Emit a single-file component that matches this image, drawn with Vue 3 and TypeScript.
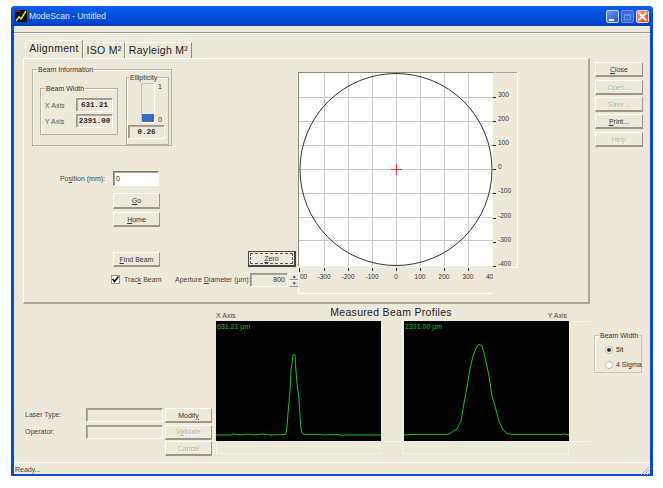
<script setup lang="ts">
const gridX = [324, 348, 372, 396, 420, 444, 468].map((v) => v - 299)
const gridY = [97, 121, 145, 169, 193, 217, 240].map((v) => v - 73)
const yLabels = [
  { t: '300', y: 20 }, { t: '200', y: 44 }, { t: '100', y: 68 }, { t: '0', y: 92 },
  { t: '-100', y: 116 }, { t: '-200', y: 141 }, { t: '-300', y: 165 }, { t: '-400', y: 189 },
]
const xLabels = [
  { t: '-300', x: 25 }, { t: '-200', x: 49 }, { t: '-100', x: 73 }, { t: '0', x: 97 },
  { t: '100', x: 121 }, { t: '200', x: 145 }, { t: '300', x: 169 },
]
const xPts = '0,114 15,114 17,113 26,114 30,113 38,114 46,113 55,114 69,113.5 70,113 71,105 72,92 74,70 75,50 77,34 78,33.5 79,34 80,50 81,62 83,78 84,95 85,108 86,112 88,113.5 105,113.5 107,114 120,113.5 124,114 165,114'
const yPts = '0,114 8,113.5 44,113.5 48,111 53,108 57,100 60,82 63,66 66,48 69,35 72,27 75,23 78,25 81,36 85,55 88,75 91,85 95,100 99,109 104,113 110,113.5 157,113.5 161,113 165,114'
</script>

<template>
  <div class="window">
    <div class="titlebar">
      <svg class="appicon" width="12" height="12" viewBox="0 0 12 12">
        <rect width="12" height="12" fill="#1a1010" />
        <path d="M0 1h5" stroke="#c02020" stroke-width="1.5" />
        <path d="M1 11 L4 7 L6 9 L11 1" stroke="#d8e020" stroke-width="1.5" fill="none" />
      </svg>
      <span class="title">ModeScan - Untitled</span>
      <div class="capbtns">
        <span class="cap min"><i class="minbar"></i></span>
        <span class="cap max"><i class="maxbox"></i></span>
        <span class="cap close">
          <svg width="11" height="11" viewBox="0 0 11 11">
            <path d="M1.5 1.5L9.5 9.5M9.5 1.5L1.5 9.5" stroke="#fff" stroke-width="2" />
          </svg>
        </span>
      </div>
    </div>
    <div class="client">
      <div class="menustrip"></div>

      <div class="tabs">
        <span class="tab active">Alignment</span>
        <span class="tab iso">ISO M²</span>
        <span class="tab ray">Rayleigh M²</span>
      </div>

      <div class="upper">
        <div class="panel">
          <div class="leftcol">
            <div class="group beam">
              <span class="legend lg-beam">Beam Information</span>
              <div class="group width">
                <span class="legend lg-width">Beam Width</span>
                <div class="axisrow"><label>X Axis</label><span class="sunken val">631.21</span></div>
                <div class="axisrow"><label>Y Axis</label><span class="sunken val">2391.00</span></div>
              </div>
              <div class="group ellip">
                <span class="legend lg-ellip">Ellipticity</span>
                <div class="barrow">
                  <div class="bar"><div class="fill"></div></div>
                  <div class="barscale"><span>1</span><span>0</span></div>
                </div>
                <span class="sunken val evalue">0.26</span>
              </div>
            </div>

            <div class="posrow">
              <label>Po<u>s</u>ition (mm):</label>
              <span class="input">0</span>
            </div>
            <button class="btn go"><u>G</u>o</button>
            <button class="btn home"><u>H</u>ome</button>

            <div class="findrow">
              <button class="btn find"><u>F</u>ind Beam</button>
              <button class="btn zero"><span class="focus"><u>Z</u>ero</span></button>
            </div>
            <div class="trackrow">
              <span class="check">
                <svg width="9" height="9" viewBox="0 0 9 9">
                  <path d="M1.5 4L3.5 6.5L7.5 1.5" stroke="#111" stroke-width="1.6" fill="none" />
                </svg>
              </span>
              <span class="tracklabel">Trac<u>k</u> Beam</span>
              <span class="aplabel">Aperture <u>D</u>iameter (µm):</span>
              <span class="sunken apval">800</span>
              <span class="spin"><i>▴</i><i>▾</i></span>
            </div>
          </div>

          <div class="plotarea">
            <div class="plotrow">
              <svg class="plot" width="194" height="193" viewBox="0 0 194 193">
                <rect width="194" height="193" fill="#fff" />
                <line v-for="x in gridX" :key="'gx' + x" :x1="x + 0.5" :x2="x + 0.5" y1="0" y2="193" stroke="#c8c8c8" />
                <line v-for="y in gridY" :key="'gy' + y" x1="0" x2="194" :y1="y + 0.5" :y2="y + 0.5" stroke="#c8c8c8" />
                <circle cx="97" cy="96.5" r="96" fill="none" stroke="#333" stroke-width="1" />
                <path d="M97.5 91V102M92 96.5H103" stroke="#f0303c" stroke-width="1.2" />
              </svg>
              <svg class="axisr" width="24" height="194" viewBox="0 0 24 194">
                <g v-for="l in yLabels" :key="l.t">
                  <line x1="0" x2="3" :y1="l.y + 4.5" :y2="l.y + 4.5" stroke="#222" />
                  <text x="5" :y="l.y + 4" class="tick">{{ l.t }}</text>
                </g>
              </svg>
            </div>
            <svg class="axisb" width="194" height="25" viewBox="0 0 194 25">
              <text x="1" y="11" class="tick">00</text>
              <text x="187" y="11" class="tick">40</text>
              <line x1="0.5" x2="0.5" y1="0" y2="4" stroke="#222" />
              <g v-for="l in xLabels" :key="l.t">
                <line :x1="l.x + 0.5" :x2="l.x + 0.5" y1="0" y2="3" stroke="#222" />
                <text :x="l.x" y="11" text-anchor="middle" class="tick">{{ l.t }}</text>
              </g>
            </svg>
          </div>
        </div>

        <div class="sidebtns">
          <button class="btn"><u>C</u>lose</button>
          <button class="btn off open">Open...</button>
          <button class="btn off save">Save...</button>
          <button class="btn print"><u>P</u>rint...</button>
          <button class="btn off help">Help</button>
        </div>
      </div>

      <div class="lower">
        <div class="operator">
          <div class="oprow">
            <label>Laser Type:</label>
            <span class="sunken opfield"></span>
            <button class="btn opbtn">Modif<u>y</u></button>
          </div>
          <div class="oprow">
            <label>Operator:</label>
            <span class="sunken opfield"></span>
            <button class="btn opbtn off">V<u>a</u>lidate</button>
          </div>
          <div class="oprow">
            <button class="btn opbtn off cancel">Cancel</button>
          </div>
        </div>

        <div class="profiles">
          <div class="profhead">
            <span class="axisname">X Axis</span>
            <span class="proftitle">Measured Beam Profiles</span>
            <span class="axisname">Y Axis</span>
          </div>
          <div class="profplots">
            <div class="profile">
              <div class="scope first">
                <span class="scopeval">631.21 µm</span>
                <svg width="165" height="120" viewBox="0 0 165 120">
                  <polyline :points="xPts" fill="none" stroke="#18c418" stroke-width="1" />
                </svg>
              </div>
              <div class="under"></div>
            </div>
            <div class="profile second">
              <div class="scope">
                <span class="scopeval">2391.00 µm</span>
                <svg width="165" height="120" viewBox="0 0 165 120">
                  <polyline :points="yPts" fill="none" stroke="#18c418" stroke-width="1" />
                </svg>
              </div>
              <div class="under"></div>
            </div>
          </div>
        </div>

        <div class="group bwgroup">
          <span class="legend lg-bw">Beam Width</span>
          <div class="radio"><i class="dot on"></i><span>5lt</span></div>
          <div class="radio"><i class="dot"></i><span>4 Sigma</span></div>
        </div>
      </div>

      <div class="status">
        <span>Ready...</span>
        <svg class="grip" width="10" height="10" viewBox="0 0 10 10">
          <path d="M9 1L1 9M9 4L4 9M9 7L7 9" stroke="#b0ac98" stroke-width="1" />
        </svg>
      </div>
    </div>
  </div>
</template>

<style scoped>
.window {
  box-sizing: border-box;
  width: 642px;
  height: 470px;
  margin: 6px 0 0 11px;
  background: #0a48dc;
  border-radius: 4px 4px 0 0;
  padding: 0 3px 2px 3px;
  display: flex;
  flex-direction: column;
  font-family: "Liberation Sans", Arial, sans-serif;
  font-size: 7px;
  color: #333;
  overflow: hidden;
}
.titlebar {
  height: 20px;
  margin: 0 -3px;
  padding: 0 3px 0 5px;
  flex: none;
  display: flex;
  align-items: center;
  background: linear-gradient(#1668ee 0, #0a5ae8 2px, #0050dc 10px, #0048d4 16px, #0040b8 20px);
}
.appicon { margin-right: 1px; margin-left: -1px; }
.title {
  color: #dfe8fa;
  font-size: 8.5px;
  margin-left: 1px;
}
.capbtns { margin-left: auto; display: flex; gap: 2px; margin-right: 1px; margin-top: 1px; }
.cap {
  box-sizing: border-box;
  width: 13px;
  height: 13px;
  border-radius: 2px;
  border: 1px solid #c8d6f8;
  display: flex;
  align-items: center;
  justify-content: center;
  position: relative;
}
.cap.min { background: linear-gradient(135deg, #6c94f0, #2a58d8); }
.cap.max { background: #3a68e0; border-color: #6c90ec; }
.cap.close { background: linear-gradient(135deg, #f09878, #d84818); border-color: #f0d8d0; }
.minbar { width: 5px; height: 2px; background: #fff; margin: 6px 3px 0 0; }
.maxbox { width: 7px; height: 6px; border: 1px solid #6a8ee8; border-top-width: 2px; box-sizing: border-box; }

.client {
  flex: 1;
  min-height: 0;
  background: #ece9d8;
  display: flex;
  flex-direction: column;
}
.menustrip {
  height: 6px;
  flex: none;
  border-bottom: 1px solid #9d9a88;
  box-shadow: 0 1px 0 #fff;
}
.tabs {
  height: 25px;
  flex: none;
  display: flex;
  align-items: flex-end;
  padding-left: 11px;
  font-size: 10.5px;
  color: #222;
}
.tab {
  box-sizing: border-box;
  height: 16px;
  line-height: 15px;
  border-top: 1px solid #fff;
  border-left: 1px solid #fff;
  border-right: 1px solid #8e8b7a;
  text-align: center;
  letter-spacing: 0.3px;
}
.tab.active { width: 58px; height: 18px; line-height: 15px; }
.tab.iso { width: 42px; }
.tab.ray { width: 67px; }

.upper { display: flex; flex: none; height: 246px; padding-left: 9px; }
.panel {
  box-sizing: border-box;
  width: 567px;
  height: 246px;
  border-top: 1px solid #fff;
  border-left: 1px solid #fff;
  border-right: 2px solid #aca899;
  border-bottom: 2px solid #aca899;
  display: flex;
}
.leftcol { width: 275px; padding: 10px 0 0 8px; box-sizing: border-box; flex: none; }
.group {
  box-sizing: border-box;
  position: relative;
  border: 1px solid #b4b1a0;
  box-shadow: inset 1px 1px 0 #fff;
}
.legend {
  position: absolute;
  top: -4px;
  background: #ece9d8;
  padding: 0 1px;
  line-height: 8px;
  white-space: nowrap;
}
.beam { width: 140px; height: 77px; }
.lg-beam { left: 4px; }
.width { position: absolute; left: 7px; top: 18px; width: 78px; height: 47px; padding-top: 8px; }
.lg-width { left: 4px; }
.axisrow { display: flex; align-items: center; height: 16px; padding-left: 4px; }
.axisrow label { width: 31px; color: #555; }
.sunken {
  box-sizing: border-box;
  display: block;
  border: 1px solid #fff;
  border-top-color: #9a9786;
  border-left-color: #9a9786;
  box-shadow: inset 1px 1px 0 #aca899;
  background: #ece9d8;
}
.val {
  width: 37px;
  height: 14px;
  line-height: 12px;
  text-align: center;
  font-family: "Liberation Mono", monospace;
  font-size: 7.5px;
  font-weight: 700;
  color: #222;
}
.ellip { position: absolute; left: 93px; top: 7px; width: 43px; height: 68px; padding: 5px 2px 0 1px; }
.lg-ellip { left: 2px; }
.barrow { display: flex; height: 42px; }
.bar {
  box-sizing: border-box;
  width: 14px;
  height: 40px;
  margin-left: 13px;
  border: 1px solid #c8c5b4;
  border-right-color: #fff;
  border-bottom-color: #fff;
  display: flex;
  align-items: flex-end;
}
.fill { width: 100%; height: 8px; background: #3a6cc4; }
.barscale {
  margin-left: 3px;
  display: flex;
  flex-direction: column;
  justify-content: space-between;
  height: 40px;
  box-sizing: border-box;
}
.evalue { width: 37px; }

.posrow { display: flex; align-items: center; margin-top: 25px; height: 14px; }
.posrow label { width: 73px; text-align: right; color: #444; margin-right: 8px; }
.input {
  box-sizing: border-box;
  width: 46px;
  height: 15px;
  background: #fff;
  border: 1px solid #fff;
  border-top-color: #7a7868;
  border-left-color: #7a7868;
  box-shadow: inset 1px 1px 0 #aca899;
  color: #222;
  padding-left: 2px;
  line-height: 13px;
}
.btn {
  box-sizing: border-box;
  display: block;
  width: 48px;
  height: 15px;
  padding: 0;
  background: #ece9d8;
  border: 1px solid #fff;
  border-right: 1px solid #9a9786;
  border-bottom: 2px solid #9a9786;
  font-family: "Liberation Sans", Arial, sans-serif;
  font-size: 7px;
  color: #333;
  line-height: 11px;
  text-align: center;
}
.btn.off { color: #b4b1a2; text-shadow: 1px 1px 0 #fff; }
.go { width: 47px; margin: 8px 0 0 81px; height: 16px; }
.home { width: 47px; margin: 3px 0 0 81px; }
.findrow { display: flex; align-items: flex-end; margin-top: 24px; margin-left: 81px; height: 16px; }
.find { width: 47px; height: 15px; }
.zero {
  margin-left: 88px;
  height: 16px;
  border: 1px solid #444;
  border-right-width: 2px;
  border-bottom-width: 2px;
  padding: 1px;
}
.focus { display: block; height: 100%; border: 1px dashed #555; box-sizing: border-box; line-height: 9px; }
.trackrow { display: flex; align-items: center; margin-top: 5px; height: 15px; padding-left: 79px; }
.check {
  box-sizing: border-box;
  width: 9px;
  height: 9px;
  background: #fff;
  border: 1px solid #9a9786;
  display: flex;
  align-items: center;
  justify-content: center;
  flex: none;
}
.check svg { flex: none; }
.tracklabel { margin-left: 4px; width: 51px; white-space: nowrap; color: #444; }
.aplabel { width: 75px; white-space: nowrap; color: #444; }
.apval { width: 38px; height: 14px; text-align: right; line-height: 12px; padding-right: 2px; flex: none; }
.spin { width: 10px; height: 14px; display: flex; flex-direction: column; margin-left: 1px; flex: none; }
.spin i {
  box-sizing: border-box;
  height: 7px;
  border: 1px solid #fff;
  border-right-color: #9a9786;
  border-bottom-color: #9a9786;
  font-style: normal;
  font-size: 5px;
  line-height: 5px;
  text-align: center;
  color: #222;
}

.plotarea { margin-top: 14px; flex: none; }
.plotrow { display: flex; }
.plot { display: block; border-left: 1px solid #8a8878; border-top: 1px solid #8a8878; margin-top: -1px; margin-left: -1px; }
.axisr {
  display: block;
  box-sizing: content-box;
  margin-top: -1px;
  border-top: 1px solid #aca899;
  border-right: 1px solid #fff;
  border-bottom: 1px solid #fff;
}
.axisb { display: block; border-left: 1px solid #fff; border-bottom: 1px solid #fff; margin-left: -1px; }
.tick { font-size: 6.5px; font-family: "Liberation Sans", Arial, sans-serif; fill: #333; }

.sidebtns { margin-left: 5px; padding-top: 4px; width: 48px; }
.sidebtns .btn { height: 15px; margin-bottom: 3px; }
.sidebtns .open { margin-top: 3px; margin-bottom: 2px; }
.sidebtns .save { margin-bottom: 2px; }

.lower { display: flex; flex: none; height: 158px; padding-left: 9px; box-sizing: border-box; }
.operator { width: 193px; flex: none; display: flex; flex-direction: column; padding-top: 104px; box-sizing: border-box; }
.oprow { display: flex; align-items: flex-start; height: 16.5px; padding-left: 2px; }
.oprow label { width: 61px; padding-top: 3px; color: #444; }
.opfield { width: 77px; height: 14px; flex: none; }
.opbtn { width: 47px; height: 15px; margin-left: 2px; }
.cancel { margin-left: 140px; }
.profiles { width: 353px; flex: none; }
.profhead { display: flex; justify-content: space-between; height: 17px; align-items: flex-end; padding: 0 2px 0 0; }
.axisname { color: #444; line-height: 8px; margin-bottom: 1px; }
.proftitle { font-size: 10.5px; color: #222; line-height: 12px; margin: 0 1px 3px 0; letter-spacing: 0.3px; }
.profplots { display: flex; gap: 23px; }
.profile { width: 165px; flex: none; }
.scope { position: relative; height: 120px; background: #000; }
.scope svg { display: block; }
.scope::after {
  content: "";
  position: absolute;
  left: 100%;
  top: 0;
  width: 21px;
  height: 119px;
  border-top: 1px solid #f6f4ea;
  border-bottom: 1px solid #f6f4ea;
}
.scope.first::after { border-top: none; width: 21px; height: 120px; border-right: 1px solid #f6f4ea; }
.scopeval {
  position: absolute;
  left: 1px;
  top: 1px;
  color: #14c814;
  font-size: 7px;
  line-height: 9px;
}
.under { box-sizing: border-box; height: 13px; border: 1px solid #f6f4ea; border-top: none; }
.second .under { margin-left: -2px; }
.bwgroup { width: 48px; height: 38px; margin: 31px 0 0 25px; flex: none; padding-top: 6px; border-color: #c8c5b4; }
.lg-bw { left: 4px; }
.radio { display: flex; align-items: center; height: 15px; white-space: nowrap; padding-left: 10px; gap: 3px; }
.dot {
  box-sizing: border-box;
  width: 8px;
  height: 8px;
  border-radius: 50%;
  background: #fff;
  border: 1px solid #bdbaa8;
  display: block;
  flex: none;
  position: relative;
}
.dot.on::after {
  content: "";
  position: absolute;
  left: 1px;
  top: 1px;
  width: 4px;
  height: 4px;
  border-radius: 50%;
  background: #333;
}
.status {
  flex: 1;
  position: relative;
  border-top: 1px solid #fff;
  padding-left: 1px;
  line-height: 13px;
  color: #444;
}
.grip { position: absolute; right: 0; bottom: 0; }
</style>

<style>
html, body { background: #fff; margin: 0; }
</style>
